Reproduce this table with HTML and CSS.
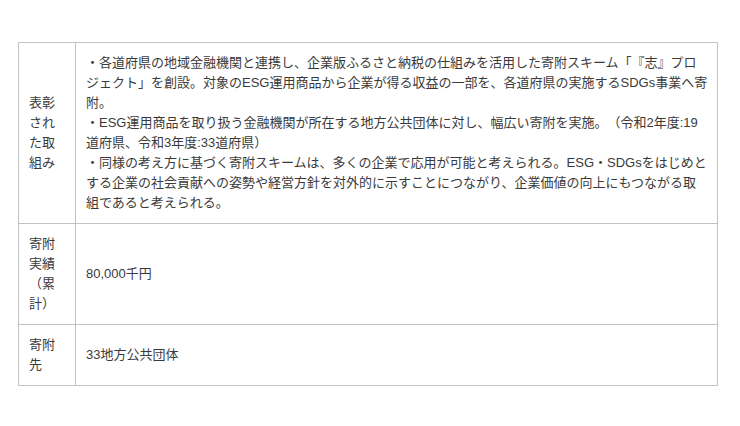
FILE: index.html
```html
<!DOCTYPE html>
<html lang="ja">
	<head>
		<meta charset="utf-8">
		<title>寄附スキーム</title>
		<link rel="stylesheet" href="styles.css">
	</head>
	<body>
	<div class="wrap">
		<table class="info">
			<tr>
				<td class="label">表彰された取組み</td>
				<td class="value">・各道府県の地域金融機関と連携し、企業版ふるさと納税の仕組みを活用した寄附スキーム「『志』プロ<br>ジェクト」を創設。対象のESG運用商品から企業が得る収益の一部を、各道府県の実施するSDGs事業へ寄<br>附。<br>・ESG運用商品を取り扱う金融機関が所在する地方公共団体に対し、幅広い寄附を実施。（令和2年度:19<br>道府県、令和3年度:33道府県）<br>・同様の考え方に基づく寄附スキームは、多くの企業で応用が可能と考えられる。ESG・SDGsをはじめと<br>する企業の社会貢献への姿勢や経営方針を対外的に示すことにつながり、企業価値の向上にもつながる取<br>組であると考えられる。</td>
			</tr>
			<tr>
				<td class="label">寄附実績（累計）</td>
				<td class="value">80,000千円</td>
			</tr>
			<tr>
				<td class="label">寄附先</td>
				<td class="value">33地方公共団体</td>
			</tr>
		</table>
	</div>
	</body>
</html>
```

FILE: styles.css
```css
body {
	margin: 0;
	background: #fff;
	color: #3a3a3a;
	font-family: "Liberation Sans", "Noto Sans CJK JP", sans-serif;
	font-size: 13px;
	line-height: 20px;
	text-spacing-trim: space-all;
}
.wrap {
	padding: 42px 0 0 18px;
}
table.info {
	border-collapse: collapse;
	width: 700px;
}
td {
	border: 1px solid #c2c2c2;
	padding: 10px;
	vertical-align: middle;
	text-align: left;
}
td.label {
	width: 36px;
}
td.value {
	padding-right: 7px;
}
```
